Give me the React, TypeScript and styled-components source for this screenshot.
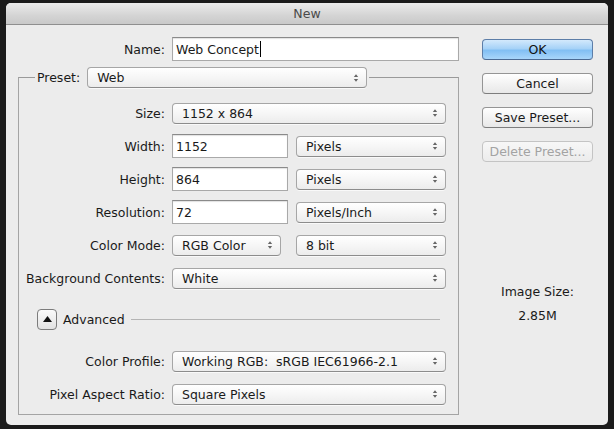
import React from "react";
import styled, { createGlobalStyle, css } from "styled-components";

const Global = createGlobalStyle`
  html, body { margin: 0; padding: 0; background: #1b1b1b; }
  body { font-family: "DejaVu Sans", "Liberation Sans", sans-serif; font-size: 12.5px; color: #1a1a1a; }
  * { box-sizing: border-box; }
`;

const Screen = styled.div`
  width: 614px;
  height: 429px;
  padding: 3px 6px 4px 6px;
  background: #1b1b1b;
`;

const Window = styled.div`
  width: 602px;
  height: 422px;
  background: #ececec;
  border-radius: 5px;
  overflow: hidden;
  display: flex;
  flex-direction: column;
`;

const TitleBar = styled.div`
  height: 22px;
  flex: none;
  display: flex;
  align-items: center;
  justify-content: center;
  background: linear-gradient(#ebebeb, #d4d4d4 60%, #c9c9c9);
  border-bottom: 1px solid #8f8f8f;
  font-size: 12.5px;
  color: #4a4a4a;
`;

const Body = styled.div`
  flex: 1;
  display: flex;
  padding: 12px 15px 0 12px;
`;

const LeftCol = styled.div`
  width: 441px;
  display: flex;
  flex-direction: column;
`;

const RightCol = styled.div`
  margin-left: 23px;
  width: 111px;
  display: flex;
  flex-direction: column;
  padding-top: 2px;
`;

const Row = styled.div`
  height: 24px;
  display: flex;
  align-items: center;
  gap: 7px;
`;

const Label = styled.div<{ $w: number }>`
  width: ${(p) => p.$w}px;
  text-align: right;
  white-space: nowrap;
  flex: none;
`;

const Fields = styled.div`
  display: flex;
  align-items: center;
`;

const TextInput = styled.div<{ $w: number }>`
  width: ${(p) => p.$w}px;
  height: 24px;
  background: #fff;
  border: 1px solid #a9a9a9;
  border-top-color: #8a8a8a;
  box-shadow: inset 0 1px 1px rgba(0, 0, 0, 0.12);
  display: flex;
  align-items: center;
  padding-left: 3px;
  white-space: nowrap;
`;

const Caret = styled.span`
  display: inline-block;
  width: 1px;
  height: 16px;
  background: #000;
  margin-left: 1px;
`;

const SelectBox = styled.div<{ $w: number; $ml?: number }>`
  width: ${(p) => p.$w}px;
  margin-left: ${(p) => p.$ml ?? 0}px;
  height: 21px;
  border: 1px solid #a6a6a6;
  border-bottom-color: #8c8c8c;
  border-radius: 4px;
  background: linear-gradient(#ffffff, #f6f6f6 50%, #ececec);
  box-shadow: 0 1px 0 rgba(255, 255, 255, 0.7);
  display: flex;
  align-items: center;
  justify-content: space-between;
  padding: 0 7px 0 9px;
  white-space: nowrap;
`;

const Arrows = () => (
  <svg width="6" height="10" viewBox="0 0 6 10">
    <path d="M0.8 4 L3 1.2 L5.2 4 Z" fill="#666" />
    <path d="M0.8 6 L3 8.8 L5.2 6 Z" fill="#666" />
  </svg>
);

const Select: React.FC<{ w: number; ml?: number; children: React.ReactNode }> = ({ w, ml, children }) => (
  <SelectBox $w={w} $ml={ml}>
    <span>{children}</span>
    <Arrows />
  </SelectBox>
);

const GroupBox = styled.div`
  margin-top: 16px;
  width: 441px;
  border: 1px solid #a4a4a4;
  border-top-color: #9a9a9a;
  padding-bottom: 8px;
  display: flex;
  flex-direction: column;
`;

const Legend = styled.div`
  margin: -11px 0 0 16px;
  align-self: flex-start;
  display: flex;
  align-items: center;
  gap: 7px;
  padding: 0 2px;
  background: #ececec;
`;

const Rows = styled.div<{ $top?: number }>`
  display: flex;
  flex-direction: column;
  gap: 9px;
  padding-top: ${(p) => p.$top ?? 0}px;
`;

const AdvancedRow = styled.div`
  height: 24px;
  margin: 17px 18px 18px 18px;
  display: flex;
  align-items: center;
`;

const Disclosure = styled.div`
  width: 20px;
  height: 21px;
  border: 1px solid #7c7c7c;
  border-radius: 4px;
  background: linear-gradient(#fafafa, #e2e2e2);
  display: flex;
  align-items: center;
  justify-content: center;
  margin-right: 6px;
`;

const Rule = styled.div`
  flex: 1;
  height: 1px;
  background: #b4b4b4;
  margin-left: 6px;
`;

const Button = styled.div<{ $primary?: boolean; $disabled?: boolean }>`
  height: 21px;
  margin-bottom: 13px;
  border: 1px solid #959595;
  border-bottom-color: #7d7d7d;
  border-radius: 4px;
  background: linear-gradient(#ffffff, #f3f3f3 50%, #e8e8e8);
  display: flex;
  align-items: center;
  justify-content: center;
  font-size: 12.5px;
  color: #1a1a1a;
  ${(p) =>
    p.$primary &&
    css`
      border-color: #5d7ea8;
      border-bottom-color: #4b6a93;
      background: linear-gradient(#d3e9fc, #a6d2f7 45%, #82bff3 55%, #a9d6fa);
      color: #111;
    `}
  ${(p) =>
    p.$disabled &&
    css`
      border-color: #c4c4c4;
      color: #a3a3a3;
      background: linear-gradient(#f7f7f7, #ececec);
    `}
`;

const SizeInfo = styled.div`
  margin-top: 109px;
  display: flex;
  flex-direction: column;
  align-items: center;
  gap: 9px;
  line-height: 15px;
`;

const LW = 146;

export default function App() {
  return (
    <>
      <Global />
      <Screen>
        <Window>
          <TitleBar>New</TitleBar>
          <Body>
            <LeftCol>
              <Row>
                <Label $w={147}>Name:</Label>
                <TextInput $w={287}>
                  Web Concept<Caret />
                </TextInput>
              </Row>
              <GroupBox>
                <Legend>
                  <span>Preset:</span>
                  <Select w={280}>Web</Select>
                </Legend>
                <Rows $top={13}>
                  <Row>
                    <Label $w={LW}>Size:</Label>
                    <Select w={274}>1152 x 864</Select>
                  </Row>
                  <Row>
                    <Label $w={LW}>Width:</Label>
                    <Fields>
                      <TextInput $w={116}>1152</TextInput>
                      <Select w={150} ml={8}>Pixels</Select>
                    </Fields>
                  </Row>
                  <Row>
                    <Label $w={LW}>Height:</Label>
                    <Fields>
                      <TextInput $w={116}>864</TextInput>
                      <Select w={150} ml={8}>Pixels</Select>
                    </Fields>
                  </Row>
                  <Row>
                    <Label $w={LW}>Resolution:</Label>
                    <Fields>
                      <TextInput $w={116}>72</TextInput>
                      <Select w={150} ml={8}>Pixels/Inch</Select>
                    </Fields>
                  </Row>
                  <Row>
                    <Label $w={LW}>Color Mode:</Label>
                    <Fields>
                      <Select w={109}>RGB Color</Select>
                      <Select w={150} ml={15}>8 bit</Select>
                    </Fields>
                  </Row>
                  <Row>
                    <Label $w={LW}>Background Contents:</Label>
                    <Select w={274}>White</Select>
                  </Row>
                </Rows>
                <AdvancedRow>
                  <Disclosure>
                    <svg width="9" height="6" viewBox="0 0 9 6">
                      <path d="M0 6 L4.5 0 L9 6 Z" fill="#111" />
                    </svg>
                  </Disclosure>
                  <span>Advanced</span>
                  <Rule />
                </AdvancedRow>
                <Rows>
                  <Row>
                    <Label $w={LW}>Color Profile:</Label>
                    <Select w={274}>Working RGB:&nbsp; sRGB IEC61966-2.1</Select>
                  </Row>
                  <Row>
                    <Label $w={LW}>Pixel Aspect Ratio:</Label>
                    <Select w={274}>Square Pixels</Select>
                  </Row>
                </Rows>
              </GroupBox>
            </LeftCol>
            <RightCol>
              <Button $primary>OK</Button>
              <Button>Cancel</Button>
              <Button>Save Preset...</Button>
              <Button $disabled>Delete Preset...</Button>
              <SizeInfo>
                <span>Image Size:</span>
                <span>2.85M</span>
              </SizeInfo>
            </RightCol>
          </Body>
        </Window>
      </Screen>
    </>
  );
}
